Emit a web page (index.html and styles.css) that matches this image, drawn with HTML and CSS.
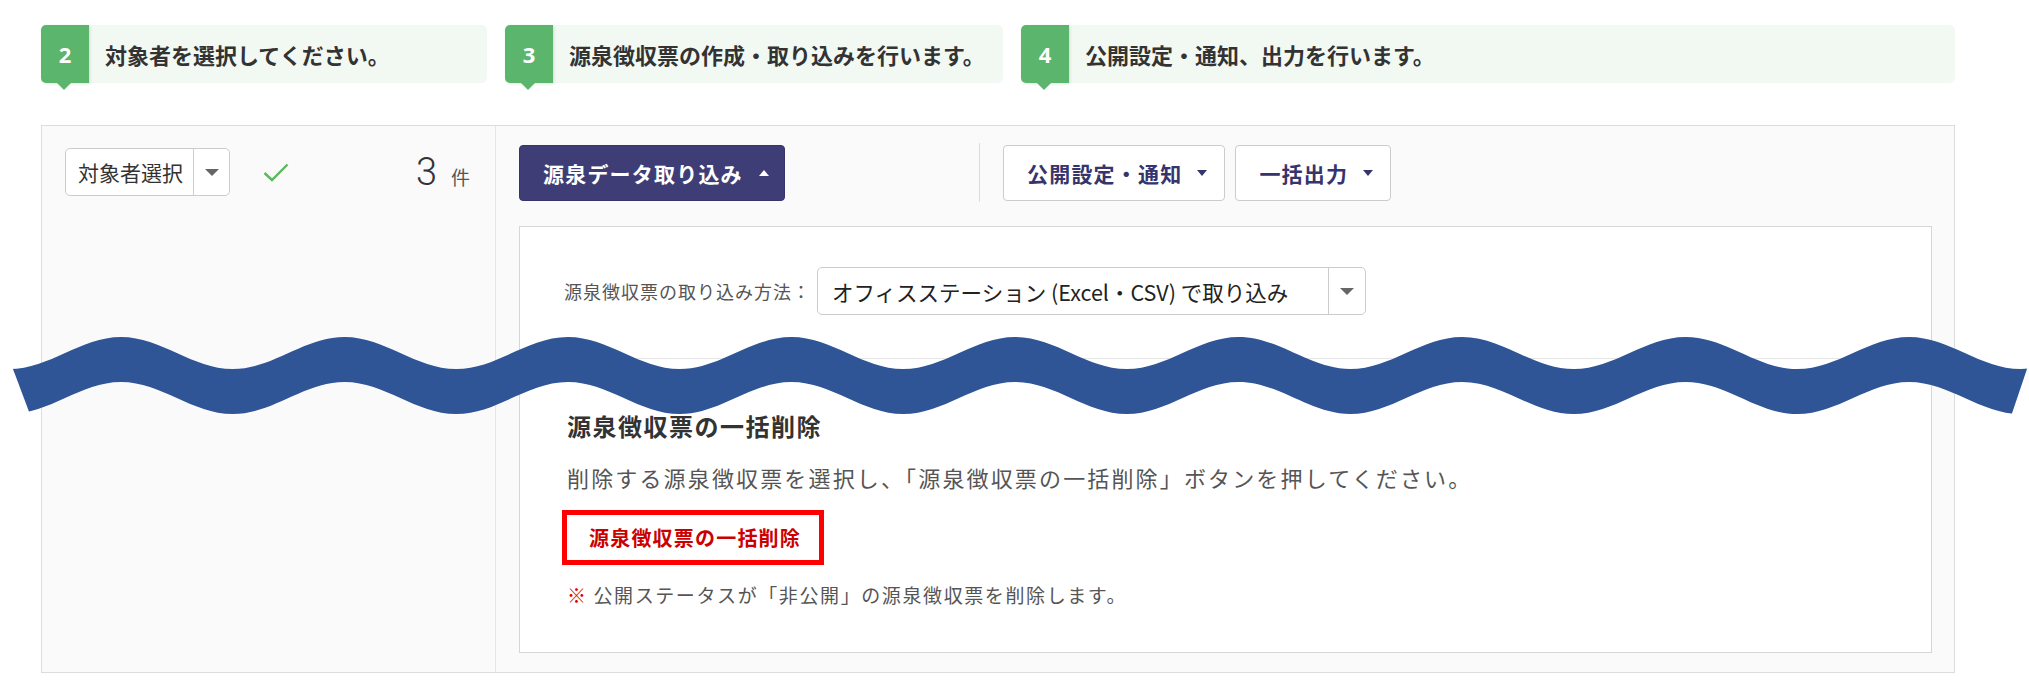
FILE: index.html
```html
<!DOCTYPE html>
<html lang="ja">
<head>
<meta charset="utf-8">
<title>源泉徴収票</title>
<link rel="stylesheet" href="styles.css">
</head>
<body>
<div class="steps">
  <div class="step step-2"><span class="step-num">2</span><span class="step-label">対象者を選択してください。</span></div>
  <div class="step step-3"><span class="step-num">3</span><span class="step-label">源泉徴収票の作成・取り込みを行います。</span></div>
  <div class="step step-4"><span class="step-num">4</span><span class="step-label">公開設定・通知、出力を行います。</span></div>
</div>

<div class="panel">
  <div class="left">
    <div class="filter-row">
      <div class="select select-sm">
        <span class="select-value">対象者選択</span>
        <span class="select-caret"><i class="caret-gray"></i></span>
      </div>
      <svg class="check" width="26" height="19" viewBox="0 0 26 19"><polyline points="1.5,10 9,17 24.5,1.5" fill="none" stroke="#5cb85c" stroke-width="2.4"/></svg>
      <div class="count"><span class="count-num">3</span><span class="count-unit">件</span></div>
    </div>
  </div>
  <div class="right">
    <div class="toolbar">
      <div class="tool-main">
        <button class="btn btn-primary">源泉データ取り込み<i class="caret-up"></i></button>
      </div>
      <div class="tool-sub">
        <button class="btn btn-outline">公開設定・通知<i class="caret-down"></i></button>
        <button class="btn btn-outline">一括出力<i class="caret-down"></i></button>
      </div>
    </div>
    <div class="inner">
      <div class="method">
        <span class="method-label">源泉徴収票の取り込み方法：</span>
        <div class="select select-lg">
          <span class="select-value">オフィスステーション (Excel・CSV) で取り込み</span>
          <span class="select-caret"><i class="caret-gray"></i></span>
        </div>
      </div>
      <div class="delete">
        <h3 class="delete-title">源泉徴収票の一括削除</h3>
        <p class="delete-desc">削除する源泉徴収票を選択し、「源泉徴収票の一括削除」ボタンを押してください。</p>
        <button class="delete-btn">源泉徴収票の一括削除</button>
        <p class="delete-note"><span class="kome">※</span> 公開ステータスが「非公開」の源泉徴収票を削除します。</p>
      </div>
    </div>
  </div>
</div>

<svg class="wave" width="2029" height="688" viewBox="0 0 2029 688">
  <defs>
    <clipPath id="waveclip"><polygon points="-5.4,320 2043.5,320 2006.4,430 35.9,430"/></clipPath>
  </defs>
  <path clip-path="url(#waveclip)" fill="#2f5597" d="M -214.25 369 c 40.7 0 71.05 -32 111.75 -32 s 71.05 32 111.75 32 s 71.05 -32 111.75 -32 s 71.05 32 111.75 32 s 71.05 -32 111.75 -32 s 71.05 32 111.75 32 s 71.05 -32 111.75 -32 s 71.05 32 111.75 32 s 71.05 -32 111.75 -32 s 71.05 32 111.75 32 s 71.05 -32 111.75 -32 s 71.05 32 111.75 32 s 71.05 -32 111.75 -32 s 71.05 32 111.75 32 s 71.05 -32 111.75 -32 s 71.05 32 111.75 32 s 71.05 -32 111.75 -32 s 71.05 32 111.75 32 s 71.05 -32 111.75 -32 s 71.05 32 111.75 32 s 71.05 -32 111.75 -32 s 71.05 32 111.75 32 L 2244.25 414 c -40.7 0 -71.05 -32 -111.75 -32 s -71.05 32 -111.75 32 s -71.05 -32 -111.75 -32 s -71.05 32 -111.75 32 s -71.05 -32 -111.75 -32 s -71.05 32 -111.75 32 s -71.05 -32 -111.75 -32 s -71.05 32 -111.75 32 s -71.05 -32 -111.75 -32 s -71.05 32 -111.75 32 s -71.05 -32 -111.75 -32 s -71.05 32 -111.75 32 s -71.05 -32 -111.75 -32 s -71.05 32 -111.75 32 s -71.05 -32 -111.75 -32 s -71.05 32 -111.75 32 s -71.05 -32 -111.75 -32 s -71.05 32 -111.75 32 s -71.05 -32 -111.75 -32 s -71.05 32 -111.75 32 s -71.05 -32 -111.75 -32 s -71.05 32 -111.75 32 Z"/>
</svg>
</body>
</html>
```

FILE: styles.css
```css
html, body {
  margin: 0;
  padding: 0;
}
body {
  position: relative;
  width: 2029px;
  height: 688px;
  overflow: hidden;
  background: #ffffff;
  font-family: "Noto Sans CJK JP", "Noto Sans", sans-serif;
  color: #333333;
}

/* steps */
.steps {
  display: flex;
  gap: 18px;
  padding: 25px 0 0 41px;
}
.step {
  display: flex;
  align-items: center;
  height: 58px;
  background: #f2f9f3;
  border-radius: 5px;
}
.step-2 { width: 446px; }
.step-3 { width: 498px; }
.step-4 { width: 934px; }
.step-num {
  position: relative;
  display: flex;
  align-items: center;
  justify-content: center;
  width: 48px;
  height: 100%;
  background: #5cb56c;
  color: #ffffff;
  font-family: "Noto Sans", sans-serif;
  font-weight: bold;
  font-size: 22px;
  border-radius: 5px 0 0 5px;
  box-shadow: 1px 1px 3px rgba(0, 0, 0, 0.12);
}
.step-num::after {
  content: "";
  position: absolute;
  left: 50%;
  bottom: -7px;
  margin-left: -8px;
  border-left: 7px solid transparent;
  border-right: 7px solid transparent;
  border-top: 7px solid #5cb56c;
}
.step-label {
  margin-left: 16px;
  font-size: 22px;
  font-weight: bold;
  color: #333333;
}

/* panel */
.panel {
  display: flex;
  box-sizing: border-box;
  width: 1914px;
  height: 548px;
  margin: 42px 0 0 41px;
  border: 1px solid #dcdcdc;
  background: #fafafa;
}
.left {
  box-sizing: border-box;
  width: 454px;
  padding: 22px 25px 0 23px;
  border-right: 1px solid #e6e6e6;
}
.filter-row {
  display: flex;
  align-items: center;
  height: 48px;
}
.select {
  display: flex;
  box-sizing: border-box;
  height: 48px;
  border: 1px solid #cccccc;
  border-radius: 5px;
  background: #ffffff;
}
.select-value {
  display: flex;
  align-items: center;
  flex: 1;
  padding: 0 10px 0 12px;
  font-size: 21px;
  color: #333333;
  white-space: nowrap;
}
.select-caret {
  display: flex;
  align-items: center;
  justify-content: center;
  width: 35px;
  border-left: 1px solid #cccccc;
}
.caret-gray {
  display: block;
  border-left: 7px solid transparent;
  border-right: 7px solid transparent;
  border-top: 7px solid #666666;
}
.select-sm { width: 165px; }
.check {
  display: block;
  margin-left: 33px;
}
.count {
  display: flex;
  align-items: baseline;
  gap: 14px;
  margin-left: auto;
}
.count-num {
  font-family: "Roboto", sans-serif;
  font-weight: 300;
  font-size: 38px;
  color: #333333;
}
.count-unit {
  font-size: 19px;
  color: #555555;
}

.right {
  flex: 1;
  display: flex;
  flex-direction: column;
  padding: 17px 22px 19px 23px;
}
.toolbar {
  display: flex;
  align-items: center;
  height: 59px;
}
.tool-main { width: 460px; }
.tool-sub {
  display: flex;
  align-items: center;
  gap: 10px;
  height: 100%;
  padding-left: 23px;
  border-left: 1px solid #dddddd;
}
.btn {
  display: flex;
  align-items: center;
  box-sizing: border-box;
  height: 56px;
  border-radius: 4px;
  font-family: inherit;
  font-size: 21px;
  font-weight: bold;
  letter-spacing: 1.2px;
  cursor: pointer;
}
.btn-primary {
  padding: 0 15px 0 23px;
  background: #3f3d76;
  border: 1px solid #36346b;
  color: #ffffff;
}
.btn-outline {
  padding: 0 17px 0 23px;
  background: #ffffff;
  border: 1px solid #cccccc;
  color: #36346c;
}
.caret-up {
  display: block;
  margin-left: 16px;
  border-left: 5px solid transparent;
  border-right: 5px solid transparent;
  border-bottom: 6px solid #ffffff;
}
.caret-down {
  display: block;
  margin-left: 15px;
  border-left: 5px solid transparent;
  border-right: 5px solid transparent;
  border-top: 6px solid #36346c;
}

.inner {
  flex: 1;
  display: flex;
  flex-direction: column;
  margin-top: 24px;
  border: 1px solid #d6d6d6;
  background: #ffffff;
}
.method {
  display: flex;
  align-items: center;
  padding: 40px 0 0 44px;
}
.method-label {
  margin-right: 6px;
  font-size: 18px;
  letter-spacing: 1px;
  color: #555555;
}
.select-lg { width: 549px; }
.select-lg .select-value {
  padding-left: 14px;
  font-size: 21.5px;
  color: #222222;
}
.select-lg .select-caret { width: 36px; }

.delete {
  margin-top: 43px;
  padding: 50px 0 0 47px;
  border-top: 1px solid #e6e6e6;
}
.delete-title {
  margin: 0;
  font-size: 24px;
  line-height: 34px;
  letter-spacing: 1.5px;
  font-weight: bold;
  color: #333333;
}
.delete-desc {
  margin: 18px 0 0;
  font-size: 22px;
  line-height: 32px;
  letter-spacing: 2.15px;
  color: #555555;
}
.delete-btn {
  display: block;
  box-sizing: border-box;
  height: 55px;
  margin: 17px 0 0 -5px;
  padding: 0 18px 0 22px;
  border: 5px solid #ff0000;
  background: #ffffff;
  color: #cc0000;
  font-family: inherit;
  font-size: 20px;
  font-weight: bold;
  letter-spacing: 1.2px;
}
.delete-note {
  margin: 17px 0 0;
  font-size: 19px;
  line-height: 26px;
  letter-spacing: 1.6px;
  color: #555555;
}
.kome { color: #e00000; }

.wave {
  position: absolute;
  left: 0;
  top: 0;
  pointer-events: none;
}
```
